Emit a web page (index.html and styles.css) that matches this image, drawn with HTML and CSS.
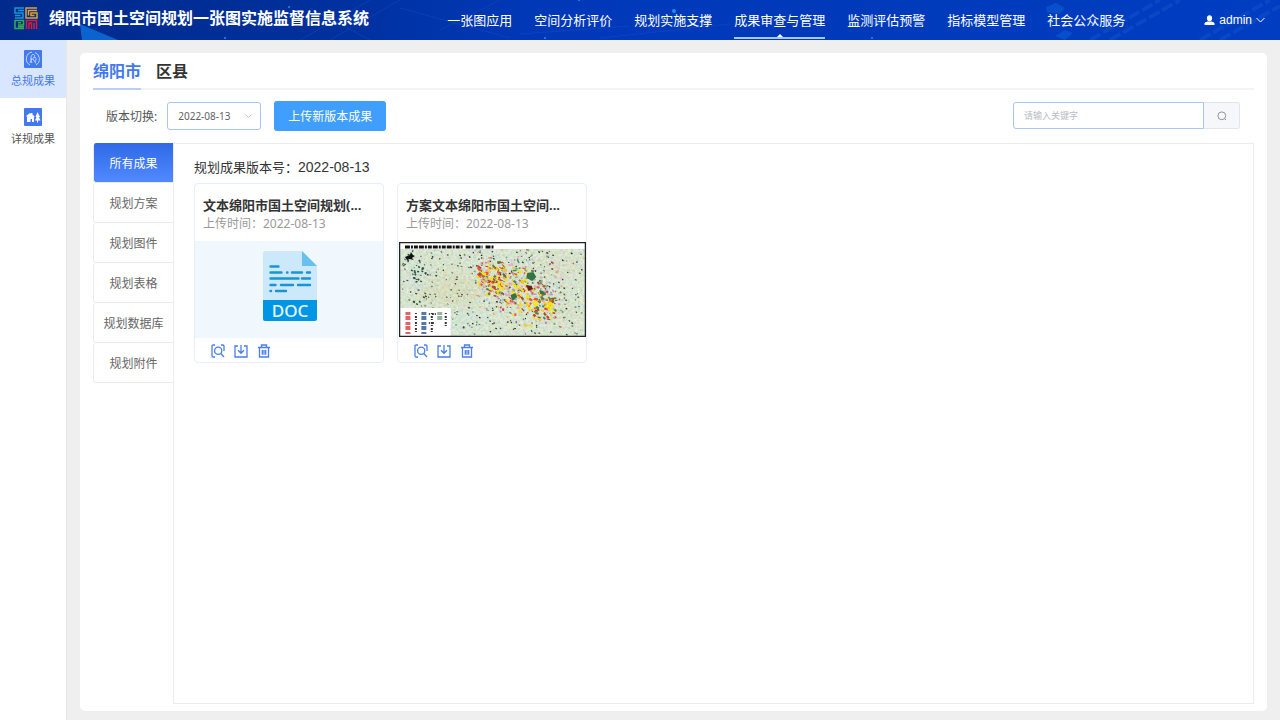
FILE: index.html
```html
<!DOCTYPE html>
<html lang="zh-CN">
  <head>
    <meta charset="UTF-8" />
    <meta name="viewport" content="width=device-width, initial-scale=1.0" />
    <title>绵阳市国土空间规划一张图实施监督信息系统</title>
    <link rel="stylesheet" href="styles.css">
  </head>
  <body>
    <svg class="symbols" aria-hidden="true">
      <symbol id="icon-view" viewBox="0 0 14 14">
        <path d="M4 1H2.200Q1 1 1 2.200V11.800Q1 13 2.200 13H4M10 1h1.800Q13 1 13 2.200V7" />
        <circle cx="7.200" cy="6.800" r="3.600" />
        <path d="M9.800 9.500L13 13" />
      </symbol>
      <symbol id="icon-download" viewBox="0 0 14 14">
        <path d="M4 2H1v11h12V2h-3M7 1v8M4 6.300l3 3 3-3" />
      </symbol>
      <symbol id="icon-delete" viewBox="0 0 14 14">
        <path d="M1 3.500h12M4.500 3V1h5v2M2.500 3.500V13h9V3.500M5.300 6v4.800M7 6v4.800M8.700 6v4.800" />
      </symbol>
    </svg>

    <header class="header">
      <svg class="header-bg" viewBox="0 0 1280 40" preserveAspectRatio="none" aria-hidden="true">
        <path d="M80 24l38 16H82z" fill="#0a63cf" />
        <g fill="none" stroke="#2a78e8" opacity=".18">
          <path d="M300 40l70-40M330 40l70-40M370 40L310 8M440 30L500 0M400 8l110 30M520 34l110-8M600 38l130-14" />
          <path d="M1090 40l70-40M1110 40l70-40M1200 40l70-40M1220 40l60-34" stroke-width="4" stroke-dasharray="12 3" />
        </g>
        <g fill="#0d62d8" opacity=".5">
          <path d="M1046 7l10-4 9 5-5 6-13-2zM1055 36l10-6 8 3-8 7zM870 22l12-3 3 4-9 3z" />
        </g>
        <g fill="#1e8cf0">
          <circle cx="289" cy="7" r="1" /><circle cx="225" cy="38" r="1" /><circle cx="674" cy="11" r="2" />
          <circle cx="579" cy="0" r="1" /><circle cx="545" cy="38" r="1" /><circle cx="872" cy="38" r="1" />
        </g>
      </svg>
      <div class="brand">
        <svg class="logo" viewBox="0 0 24 23" fill="none" stroke-width="1.500" aria-hidden="true">
          <path d="M10 1H1v5h8v5H1M10 3.500H4M1 8.500h5.500" stroke="#1597d4" />
          <path d="M23 1H12v10h11V6h-6v2.500h3.500M23 3.500h-8.500v5" stroke="#e0a030" />
          <path d="M10 21.500H1v-8h8.500v4.500H4M4 15.700h3M4 19.700h6" stroke="#35ad4b" />
          <path d="M12.500 22v-8.500h10V22M15 22v-6h2.500v6M20 22v-6" stroke="#d3203c" />
        </svg>
        <h1 class="brand-title">绵阳市国土空间规划一张图实施监督信息系统</h1>
      </div>
      <nav class="nav">
        <a class="nav-link" href="#">一张图应用</a>
        <a class="nav-link" href="#">空间分析评价</a>
        <a class="nav-link" href="#">规划实施支撑</a>
        <a class="nav-link active" href="#">成果审查与管理</a>
        <a class="nav-link" href="#">监测评估预警</a>
        <a class="nav-link" href="#">指标模型管理</a>
        <a class="nav-link" href="#">社会公众服务</a>
      </nav>
      <button class="user" type="button">
        <svg width="11" height="11" viewBox="0 0 11 11" fill="#fff" aria-hidden="true">
          <ellipse cx="5.500" cy="3.200" rx="2.600" ry="3" />
          <path d="M.5 10V8.500Q.5 7 3.500 6.500h4Q10.500 7 10.500 8.500V10z" />
        </svg>
        <span>admin</span>
        <svg width="9" height="6" viewBox="0 0 9 6" fill="none" stroke="#fff" aria-hidden="true">
          <path d="M.5 1l4 4 4-4" />
        </svg>
      </button>
    </header>

    <div class="main">
      <aside class="sidebar">
        <a class="side-link active" href="#">
          <svg width="18" height="18" viewBox="0 0 18 18" fill="none" aria-hidden="true">
            <rect width="18" height="18" rx="1" fill="#4379ee" />
            <path d="M6 15A7 7 0 0 1 8 2M11 2.500a7 7 0 0 1 1 12.500M8 13c-2-4-1-9 1.500-8.500S9.500 9 7.500 9.500M9 9l3 4.500M10 7c3 0 2 4 1 5M6 13l2-5" stroke="#c9dcff" stroke-width=".9" />
          </svg>
          <span>总规成果</span>
        </a>
        <a class="side-link" href="#">
          <svg width="18" height="18" viewBox="0 0 18 18" aria-hidden="true">
            <rect width="18" height="18" rx="1" fill="#4379ee" />
            <path d="M2 8l4-3 1 .7V5h1.500v1.800L11 8.500H10V14H8v-3H6.500v3H3V8.500zM13.500 4l2.500 5h-1l1.500 3.500H14V14.500h-1v-2h-2l1.500-3.500h-1z" fill="#fff" />
          </svg>
          <span>详规成果</span>
        </a>
      </aside>

      <main class="panel">
        <div class="tabs">
          <a class="tab active" href="#">绵阳市</a>
          <a class="tab" href="#">区县</a>
        </div>

        <div class="toolbar">
          <label class="toolbar-label" for="version">版本切换:</label>
          <div class="select-box">
            <select class="select" id="version">
              <option>2022-08-13</option>
            </select>
            <svg class="select-arrow" width="7" height="5" viewBox="0 0 7 5" fill="none" stroke="#c0c4cc" aria-hidden="true">
              <path d="M.5 .5l3 3 3-3" />
            </svg>
          </div>
          <button class="upload-button" type="button">上传新版本成果</button>
          <form class="search">
            <input class="search-input" type="text" placeholder="请输入关键字" aria-label="关键字" />
            <button class="search-button" type="button" aria-label="搜索">
              <svg width="10" height="10" viewBox="0 0 10 10" fill="none" stroke="#909399" aria-hidden="true">
                <circle cx="4.800" cy="4.800" r="3.900" />
                <path d="M7.500 7.500L9 9" />
              </svg>
            </button>
          </form>
        </div>

        <div class="content">
          <div class="types">
            <button class="type active" type="button">所有成果</button>
            <button class="type" type="button">规划方案</button>
            <button class="type" type="button">规划图件</button>
            <button class="type" type="button">规划表格</button>
            <button class="type" type="button">规划数据库</button>
            <button class="type" type="button">规划附件</button>
          </div>

          <section class="results">
            <h2 class="results-title">规划成果版本号：<span class="results-version">2022-08-13</span></h2>
            <div class="cards">
              <article class="card">
                <div class="card-head">
                  <h3 class="card-title">文本绵阳市国土空间规划(...</h3>
                  <p class="card-time">上传时间：2022-08-13</p>
                </div>
                <div class="card-cover doc">
                  <svg width="54" height="70" viewBox="0 0 54 70" role="img" aria-label="DOC">
                    <path d="M2 0h37l15 15v35H0V2Q0 0 2 0z" fill="#cbe9fa" />
                    <path d="M39 0l15 15H39z" fill="#69c0ee" />
                    <path d="M0 49h54v19q0 2-2 2H2q-2 0-2-2z" fill="#0096e6" />
                    <g stroke="#1a94d6" stroke-width="2.400" stroke-linecap="round">
                      <path d="M7.500 15.500h8M7.500 21.500h11M24 21.500h.5M29 21.500h10M44 21.500h3M7.500 27.500h28M39 27.500h8M7.500 34h5M18 34h12M35 34h12M7.500 40h.5M13 40h10" />
                    </g>
                    <text class="doc-text" x="27" y="66" text-anchor="middle">DOC</text>
                  </svg>
                </div>
                <div class="card-actions">
                  <button class="icon-button" type="button" aria-label="预览"><svg><use href="#icon-view" /></svg></button>
                  <button class="icon-button" type="button" aria-label="下载"><svg><use href="#icon-download" /></svg></button>
                  <button class="icon-button" type="button" aria-label="删除"><svg><use href="#icon-delete" /></svg></button>
                </div>
              </article>

              <article class="card">
                <div class="card-head">
                  <h3 class="card-title">方案文本绵阳市国土空间...</h3>
                  <p class="card-time">上传时间：2022-08-13</p>
                </div>
                <div class="card-cover">
                  <svg class="map" viewBox="0 0 188 95" preserveAspectRatio="none" role="img" aria-label="规划图">
                    <defs>
                      <filter id="grain" x="0" y="0" width="1" height="1">
                        <feTurbulence type="fractalNoise" baseFrequency=".4" numOctaves="3" seed="4" />
                        <feColorMatrix values="1.300 0 0 0 .1  0 1 0 0 .3  0 0 1.300 0 .05  0 0 0 0 .5" />
                      </filter>
                      <filter id="soft"><feGaussianBlur stdDeviation="7" /></filter>
                    </defs>
                    <rect width="188" height="95" fill="#cfe0c4" />
                    <g filter="url(#soft)">
                      <ellipse cx="52" cy="48" rx="36" ry="17" fill="#cdd3a5" />
                      <ellipse cx="160" cy="25" rx="22" ry="14" fill="#d2d6b8" />
                      <ellipse cx="65" cy="80" rx="25" ry="12" fill="#c5e3cf" />
                      <ellipse cx="18" cy="35" rx="12" ry="12" fill="#c4dfd6" />
                      <ellipse cx="165" cy="70" rx="14" ry="9" fill="#cfd6b2" />
                    </g>
                    <rect width="188" height="95" filter="url(#grain)" />
                    <g id="map-marks"></g>
                    <path d="M129 31l6-1 3 5-4 4-6-3zM112 53l5-2 2 4-5 4zM141 48l4 1 2 4-5-1z" fill="#337447" />
                    <path d="M128 43l5 1 2 3-5 2z" fill="#6f1f18" />
                    <rect x="1" y="1" width="186" height="6" fill="#fff" />
                    <path d="M6 5h58M67 5h8M77 5h7M87 5h8" stroke="#111" stroke-width="3" stroke-dasharray="5 1 2 1 4 1" />
                    <path d="M6 15l5-2 1-3 2 3 2 1-3 2 2 2-4-1-3 1z" fill="#111" />
                    <rect x="1" y="66" width="51" height="28" fill="#fff" />
                    <g stroke-width="5" stroke-dasharray="3 1 4 2">
                      <path d="M9 70v22" stroke="#e06464" />
                      <path d="M25 70v22" stroke="#5479a8" />
                      <path d="M41 70v8" stroke="#94b49c" />
                    </g>
                    <path d="M17 71v20M33 71v20M47 71v14M30 72h8M30 81h5" stroke="#333" stroke-width="2" stroke-dasharray="1 2 2 1" />
                    <rect x=".5" y=".5" width="187" height="94" fill="none" stroke="#222" stroke-width="1.500" />
                  </svg>
                </div>
                <div class="card-actions">
                  <button class="icon-button" type="button" aria-label="预览"><svg><use href="#icon-view" /></svg></button>
                  <button class="icon-button" type="button" aria-label="下载"><svg><use href="#icon-download" /></svg></button>
                  <button class="icon-button" type="button" aria-label="删除"><svg><use href="#icon-delete" /></svg></button>
                </div>
              </article>
            </div>
          </section>
        </div>
      </main>
    </div>
    <script src="map.js"></script>
  </body>
</html>
```

FILE: styles.css
```css
* {
  box-sizing: border-box;
}

body {
  margin: 0;
  min-height: 100vh;
  display: flex;
  flex-direction: column;
  font-family: "Noto Sans", "Noto Sans CJK SC", sans-serif;
  font-size: 12px;
  color: #333;
  background-color: #efefef;
}

a {
  color: inherit;
  text-decoration: none;
}

button,
input,
select {
  font-family: inherit;
  margin: 0;
}

button {
  cursor: pointer;
}

h1,
h2,
h3,
p {
  margin: 0;
}

.symbols {
  position: absolute;
  width: 0;
  height: 0;
}

/* header */
.header {
  position: relative;
  display: flex;
  height: 40px;
  padding: 0 15px 0 14px;
  color: #fff;
  background: linear-gradient(90deg, #012a8c 0, #00309c 25%, #0038b8 42%, #003dc0 100%);
}

.header-bg {
  position: absolute;
  top: 0;
  left: 0;
  width: 100%;
  height: 100%;
}

.brand,
.nav,
.user {
  position: relative;
}

.brand {
  display: flex;
  align-items: center;
  gap: 11px;
  padding-bottom: 4px;
}

.logo {
  width: 24px;
  height: 23px;
}

.brand-title {
  font-size: 16px;
  line-height: 24px;
  font-weight: bold;
  white-space: nowrap;
}

.nav {
  display: flex;
  gap: 22px;
  margin-left: auto;
}

.nav-link {
  position: relative;
  height: 39px;
  font-size: 13px;
  line-height: 40px;
  white-space: nowrap;
}

.nav-link.active {
  border-bottom: 2px solid #a9c9fa;
}

.nav-link.active::after {
  content: "";
  position: absolute;
  left: 50%;
  bottom: 0;
  margin-left: -3px;
  border: 3px solid transparent;
  border-top: 0;
  border-bottom: 3px solid #fff;
}

.user {
  display: flex;
  align-items: center;
  gap: 4px;
  margin-left: 79px;
  padding: 0;
  border: none;
  background: none;
  color: #fff;
  font-family: "Liberation Sans", sans-serif;
  font-size: 12px;
}

/* sidebar */
.main {
  flex: 1;
  display: flex;
}

.sidebar {
  width: 67px;
  background-color: #fff;
  border-right: 1px solid #e6e6e6;
}

.side-link {
  display: flex;
  flex-direction: column;
  align-items: center;
  gap: 4px;
  height: 58px;
  padding-top: 10px;
  font-size: 11px;
  line-height: 18px;
  color: #555;
}

.side-link.active {
  color: #4379ee;
  background-color: #d9e6ff;
}

/* panel */
.panel {
  flex: 1;
  display: flex;
  flex-direction: column;
  margin: 13px 13px 9px;
  padding: 0 13px 7px;
  background-color: #fff;
  border-radius: 5px;
}

.tabs {
  display: flex;
  gap: 15px;
  height: 37px;
  border-bottom: 2px solid #f4f4f4;
}

.tab {
  height: 37px;
  font-size: 16px;
  line-height: 36px;
  font-weight: bold;
}

.tab.active {
  color: #4379ee;
  border-bottom: 2px solid #b8cffa;
}

.toolbar {
  display: flex;
  align-items: center;
  height: 53px;
  padding: 0 14px 2px 13px;
}

.toolbar-label {
  margin-right: 10px;
  color: #555;
}

.select-box {
  position: relative;
  margin-right: 13px;
}

.select {
  display: block;
  width: 94px;
  height: 28px;
  padding: 0 10px;
  border: 1px solid #a8c5f5;
  border-radius: 3px;
  background-color: #fff;
  color: #606266;
  font-size: 10px;
  appearance: none;
}

.select-arrow {
  position: absolute;
  top: 12px;
  right: 9px;
  pointer-events: none;
}

.upload-button {
  height: 30px;
  padding: 0 14px;
  border: none;
  border-radius: 3px;
  background-color: #409eff;
  color: #fff;
  font-size: 12px;
}

.search {
  display: flex;
  margin-left: auto;
}

.search-input {
  width: 191px;
  height: 27px;
  padding: 0 10px;
  border: 1px solid #a8c5f5;
  border-radius: 3px 0 0 3px;
  font-size: 9px;
}

.search-input::placeholder {
  color: #b8bcc4;
}

.search-button {
  display: flex;
  align-items: center;
  justify-content: center;
  width: 36px;
  height: 27px;
  padding: 0;
  border: 1px solid #e2e5ec;
  border-left: none;
  border-radius: 0 3px 3px 0;
  background-color: #f5f7fa;
}

/* content */
.content {
  flex: 1;
  display: flex;
}

.types {
  width: 80px;
}

.type {
  display: block;
  width: 100%;
  height: 40px;
  padding: 0;
  border: 1px solid #ececec;
  border-right: none;
  border-top: none;
  border-radius: 3px 0 0 3px;
  background-color: #fff;
  color: #666;
  font-size: 12px;
}

.type.active {
  color: #fff;
  background: linear-gradient(#2f69e6, #5089ff);
}

.results {
  flex: 1;
  padding: 13px 20px;
  border: 1px solid #ececec;
}

.results-title {
  margin-bottom: 6px;
  font-size: 13px;
  line-height: 20px;
  font-weight: normal;
}

.results-version {
  font-family: "Liberation Sans", sans-serif;
  font-size: 14px;
}

.cards {
  display: flex;
  flex-wrap: wrap;
  gap: 13px;
}

.card {
  width: 190px;
  border: 1px solid #e6eefb;
  border-radius: 4px;
  background-color: #fff;
}

.card-head {
  height: 57px;
  padding: 11px 8px 0;
}

.card-title {
  font-size: 13px;
  line-height: 20px;
  font-weight: bold;
  white-space: nowrap;
}

.card-time {
  line-height: 18px;
  color: #999;
}

.card-cover {
  display: flex;
  height: 97px;
  padding: 1px 0 1px 1px;
}

.card-cover.doc {
  align-items: center;
  justify-content: center;
  padding-bottom: 8px;
  background-color: #f0f8fd;
}

.doc-text {
  fill: #e8f6ff;
  font-size: 17px;
  font-weight: 500;
}

.map {
  display: block;
  width: 100%;
  height: 100%;
}

.card-actions {
  display: flex;
  align-items: center;
  gap: 9px;
  height: 24px;
  padding: 1px 0 0 16px;
}

.icon-button {
  width: 14px;
  height: 14px;
  padding: 0;
  border: none;
  background: none;
}

.icon-button svg {
  display: block;
  width: 14px;
  height: 14px;
  fill: none;
  stroke: #4a7ee8;
  stroke-width: 1.3;
}
```

FILE: map.js
```js
// scatter of land parcels and village dots, seeded so it is the same each time
let seed = 90127;
function rand() {
  seed = (seed * 16807) % 2147483647;
  return seed / 2147483647;
}

const marks = document.getElementById("map-marks");

function addMark(x, y, w, h, color) {
  const rect = document.createElementNS("http://www.w3.org/2000/svg", "rect");
  rect.setAttribute("x", x);
  rect.setAttribute("y", y);
  rect.setAttribute("width", w);
  rect.setAttribute("height", h);
  rect.setAttribute("fill", color);
  rect.setAttribute("transform", `rotate(${rand() * 60} ${x} ${y})`);
  marks.appendChild(rect);
}

function pick(list) {
  return list[Math.floor(rand() * list.length)];
}

// sum of three draws, bunched round 0
function spread(size) {
  return (rand() + rand() + rand() - 1.5) * size;
}

// villages
for (let i = 0; i < 330; i++) {
  addMark(3 + rand() * 181, 8 + rand() * 84, 1 + rand(), 1 + rand() * 0.4, pick(["#26302a", "#4d5a45", "#6b7a63"]));
}

// woods on the west side
for (let i = 0; i < 25; i++) {
  addMark(18 + spread(12), 42 + spread(26), 2, 1.5, "#2d4a33");
}

// outskirts
const outer = ["#e9a5c4", "#a9c8ec", "#b98fd0", "#76b58a", "#e0b070", "#d85c4a", "#a9d8e8"];
for (let i = 0; i < 240; i++) {
  const t = rand();
  addMark(74 + t * 90, 30 + t * 22 + spread(34), 1 + rand() * 2, 1 + rand(), pick(outer));
}

// city core
const core = ["#f7e313", "#f7e313", "#f7e313", "#f4c91c", "#e8542a", "#c83a32", "#f0a0b8", "#3f8a52", "#8a5a28"];
for (let i = 0; i < 330; i++) {
  const t = rand();
  const size = 8 + Math.sin(t * Math.PI) * 20;
  addMark(79 + t * 78, 30 + t * 34 + spread(size), 1.5 + rand() * 2.5, 1 + rand() * 1.5, pick(core));
}
```
